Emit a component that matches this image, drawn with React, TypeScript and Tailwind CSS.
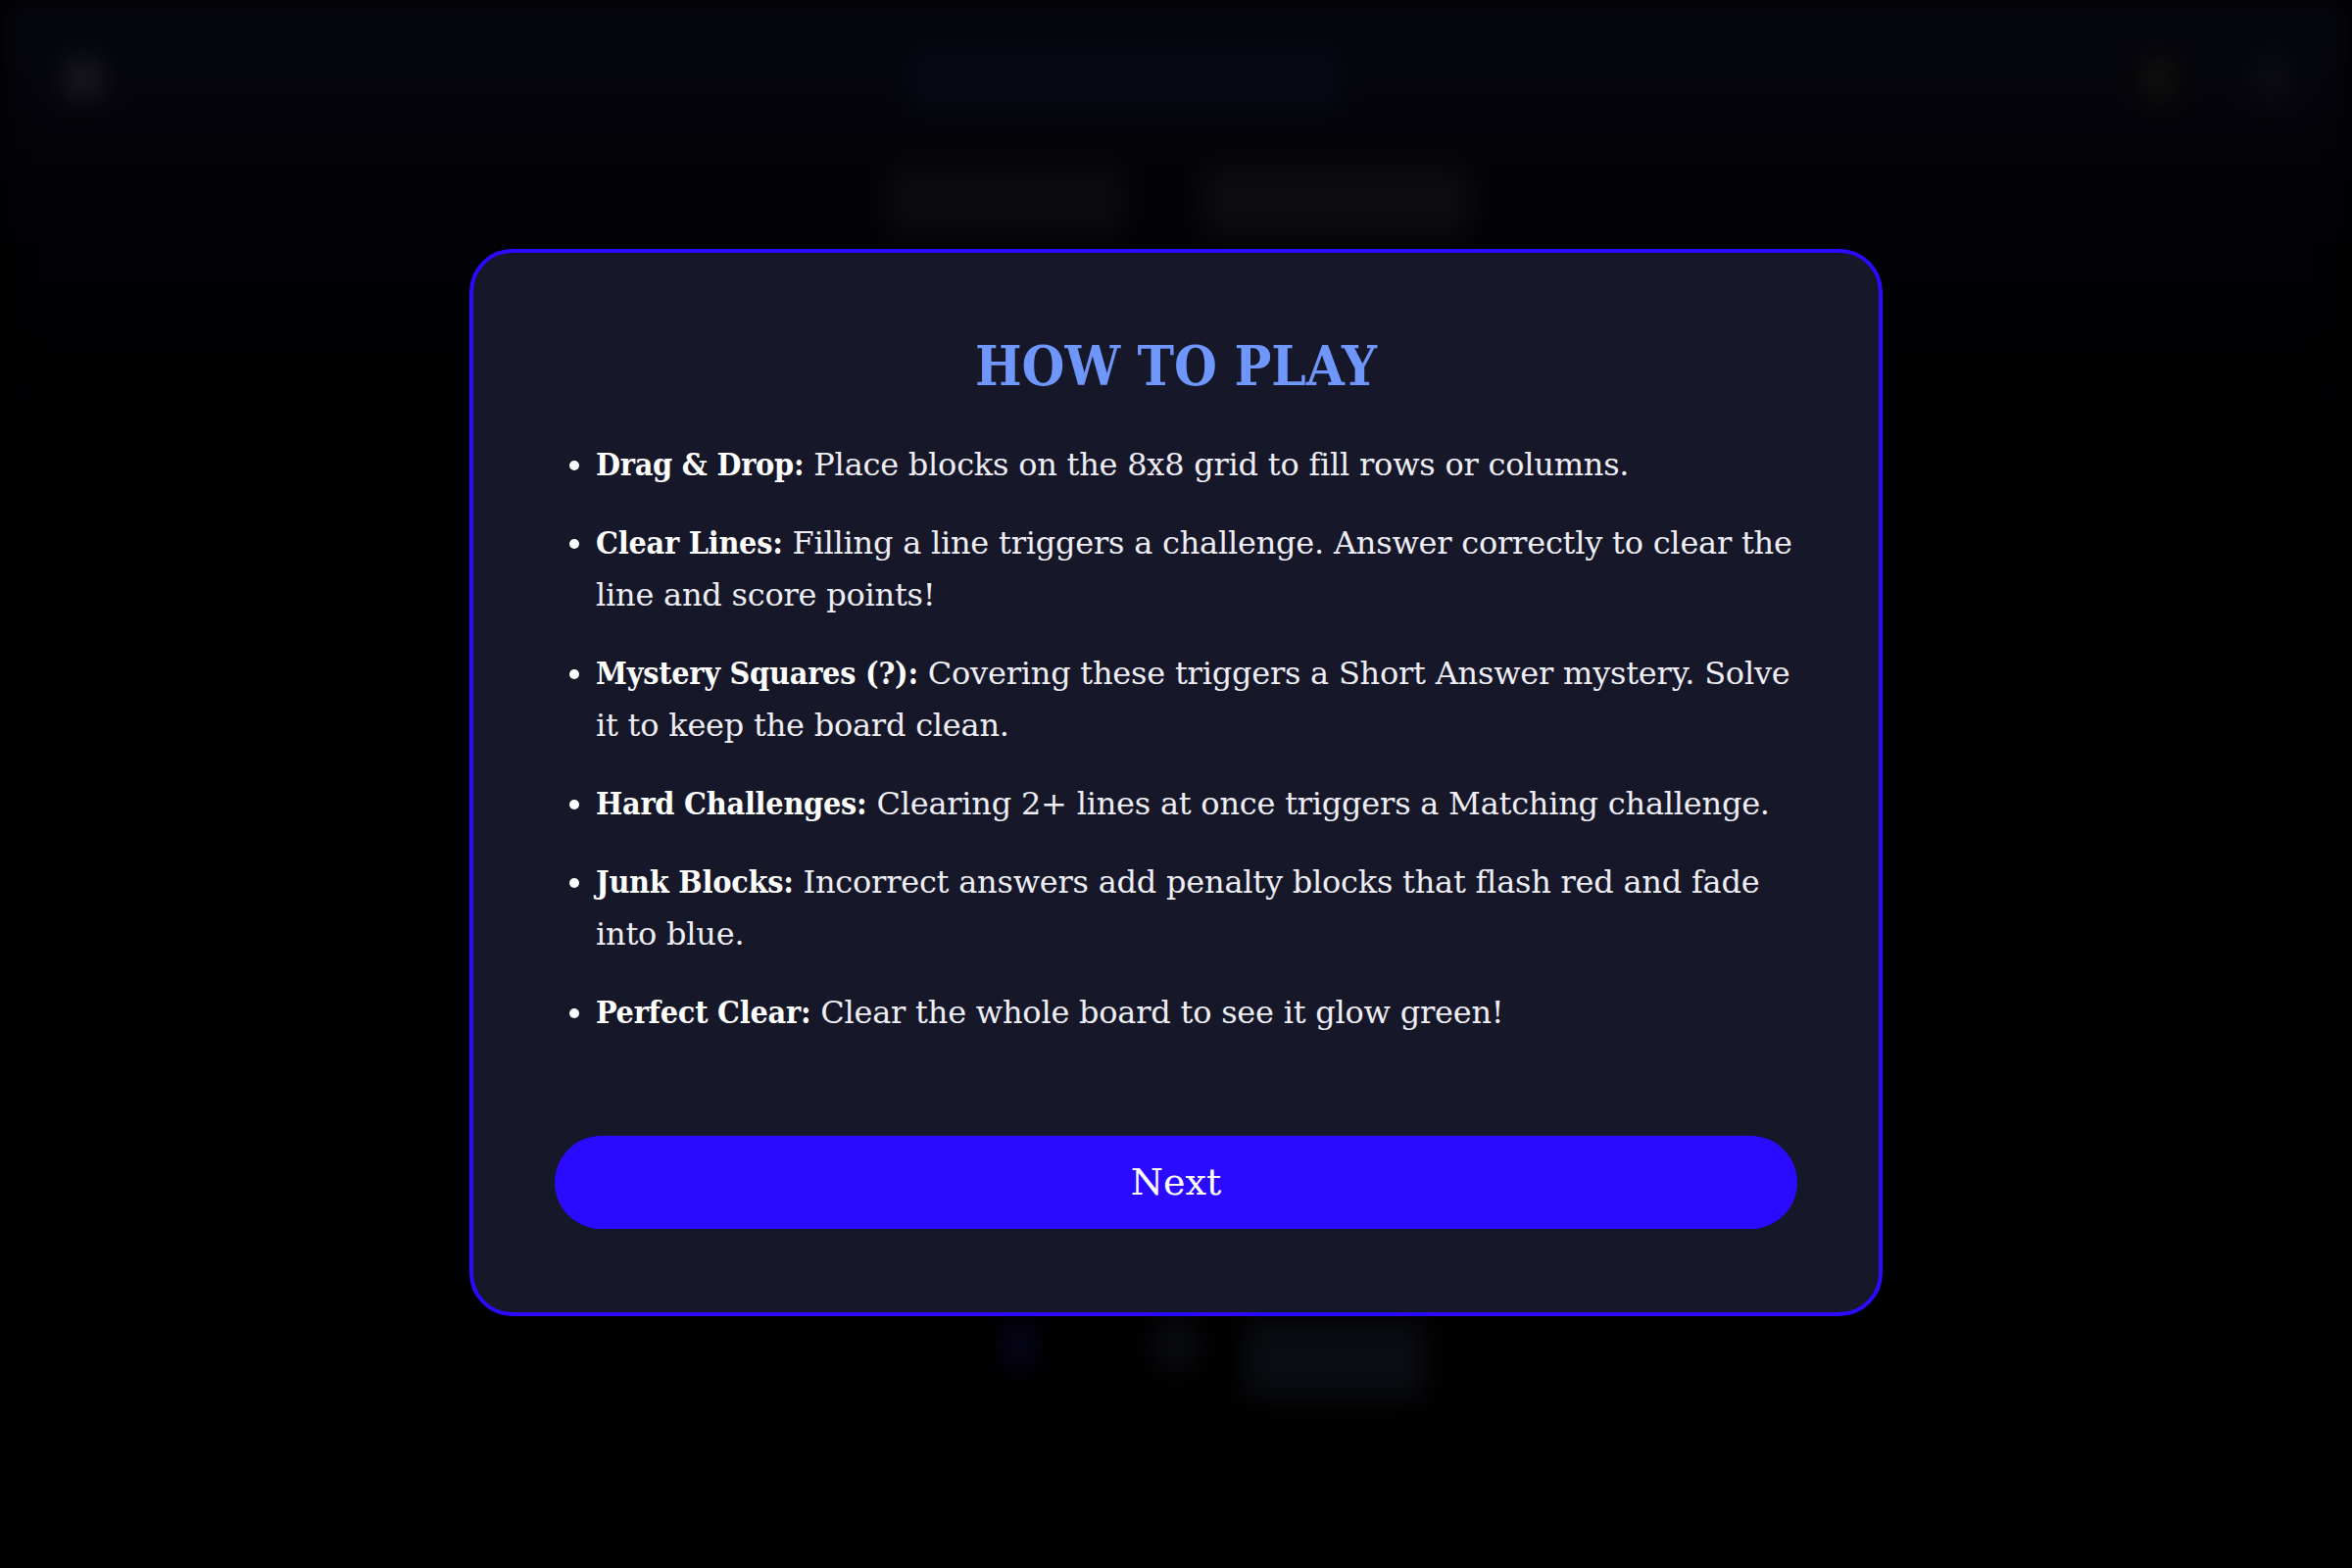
import React from "react";

const rules = [
  { title: "Drag & Drop:", text: "Place blocks on the 8x8 grid to fill rows or columns." },
  { title: "Clear Lines:", text: "Filling a line triggers a challenge. Answer correctly to clear the line and score points!" },
  { title: "Mystery Squares (?):", text: "Covering these triggers a Short Answer mystery. Solve it to keep the board clean." },
  { title: "Hard Challenges:", text: "Clearing 2+ lines at once triggers a Matching challenge." },
  { title: "Junk Blocks:", text: "Incorrect answers add penalty blocks that flash red and fade into blue." },
  { title: "Perfect Clear:", text: "Clear the whole board to see it glow green!" },
];

export default function App(): React.ReactElement {
  return (
    <div className="relative h-[1600px] w-full overflow-hidden bg-black font-['DejaVu_Serif',serif]">
      {/* Blurred game screen behind the modal */}
      <div className="flex h-full flex-col bg-gradient-to-b from-[#05050e] via-black to-black blur-[14px]">
        <div className="flex h-[160px] items-center justify-between px-[62px]">
          <div className="h-[46px] w-[46px] rounded-full bg-[#17171d]" />
          <div className="h-[60px] w-[440px] rounded-lg bg-[#080914]" />
          <div className="flex items-center gap-[80px]">
            <div className="h-[46px] w-[30px] rounded-full bg-[#15130c]" />
            <div className="h-[50px] w-[40px] rounded-md bg-[#0b0b12]" />
          </div>
        </div>
        <div className="flex justify-center gap-[76px] pl-[4px] pt-[8px]">
          <div className="h-[74px] w-[245px] rounded-2xl bg-[#0b0b0d]" />
          <div className="h-[74px] w-[276px] rounded-2xl bg-[#0c0c0e]" />
        </div>
        <div className="mt-[1105px] flex items-start justify-center pl-[79px]">
          <div className="h-[50px] w-[30px] rounded-full bg-[#07061f]" />
          <div className="ml-[125px] h-[50px] w-[40px] rounded-md bg-[#0a0c12]" />
          <div className="ml-[50px] h-[80px] w-[184px] rounded-md bg-[#0a0c12]" />
        </div>
      </div>

      {/* Modal overlay */}
      <div className="absolute inset-0 flex items-start justify-center pt-[254px]">
        <div className="w-[1442px] rounded-[44px] border-[4.5px] border-[#2a0bff] bg-[#161729] px-[83px] pt-[80px] pb-[85px]">
          <h2 className="text-center text-[56px] font-bold leading-[70px] text-[#6f97fb] font-stretch-condensed">
            HOW TO PLAY
          </h2>
          <ul className="mt-[40px] flex list-disc flex-col gap-[26px] pl-[42px] text-[32px] leading-[53.6px] tracking-[-0.007em] text-[#eeeef4]">
            {rules.map((r) => (
              <li key={r.title} className="marker:text-white">
                <span className="font-bold text-white font-stretch-condensed">{r.title}</span> {r.text}
              </li>
            ))}
          </ul>
          <button className="mt-[99px] flex h-[95px] w-full items-center justify-center rounded-full bg-[#2a0bff] text-[38px] text-white">
            Next
          </button>
        </div>
      </div>
    </div>
  );
}
